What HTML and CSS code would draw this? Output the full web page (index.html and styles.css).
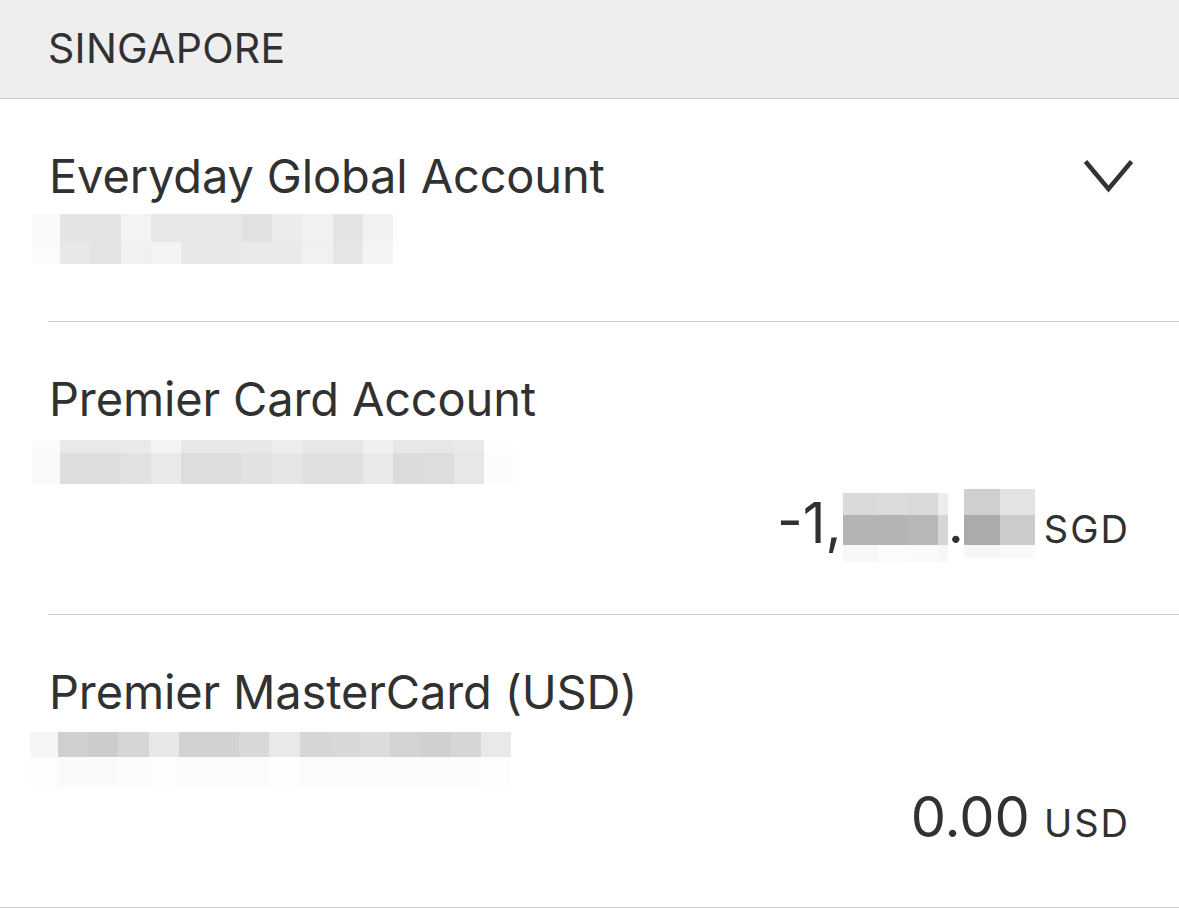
FILE: index.html
```html
<!DOCTYPE html>
<html lang="en">
<head>
  <meta charset="UTF-8" />
  <meta name="viewport" content="width=device-width, initial-scale=1" />
  <title>Accounts</title>
  <link rel="stylesheet" href="styles.css">
</head>
<body>

  <!-- Section title -->
  <div class="section-header">SINGAPORE</div>

  <!-- Everyday Global Account -->
  <div class="account account--everyday">
    <div class="account-head">
      <div class="account-name">Everyday Global Account</div>
      <svg class="chevron" viewBox="0 0 51 35" width="51" height="35" aria-hidden="true">
        <polyline points="2.5,2.5 25.5,30 48.5,2.5" />
      </svg>
    </div>
    <div class="mosaic mosaic--number"
         data-cols="28 30.3 30.3 30.3 30.3 30.3 30.3 30.3 30.3 30.3 30.3 30.3"
         data-rows="28 22"
         data-shades="fa e4 e4 f3 e8 e8 e8 e1 ec f2 e4 f2 | fb e8 e4 f1 f3 e8 e8 e9 ea f1 e6 f4"></div>
  </div>

  <!-- Premier Card Account -->
  <div class="account account--card">
    <div class="account-head">
      <div class="account-name">Premier Card Account</div>
    </div>
    <div class="mosaic mosaic--number"
         data-cols="28 30.3 30.3 30.3 30.3 30.3 30.3 30.3 30.3 30.3 30.3 30.3 30.3 30.3 30.3 29"
         data-rows="13 31"
         data-shades="fb e9 e9 ea f3 e8 e8 e8 ed e7 e7 f0 e7 e7 ea fe | fa de de e2 e9 dd dd e2 e6 e0 e0 e9 db dd e7 fc"></div>
    <div class="amount">
      <span class="amount-value">-1,</span>
      <div class="mosaic mosaic--whole"
           data-cols="35 30 30 10"
           data-rows="22 30 17"
           data-shades="d9 dc d9 ec | b3 b3 b7 d6 | f8 fc fa f7"></div>
      <span class="amount-value">.</span>
      <div class="mosaic mosaic--cents"
           data-cols="36 35"
           data-rows="26 30 13"
           data-shades="cf e3 | ab cb | f6 f9"></div>
      <span class="amount-currency">SGD</span>
    </div>
  </div>

  <!-- Premier MasterCard (USD) -->
  <div class="account account--usd">
    <div class="account-head">
      <div class="account-name">Premier MasterCard (USD)</div>
    </div>
    <div class="mosaic mosaic--number"
         data-cols="28 30.2 30.2 30.2 30.2 30.2 30.2 30.2 30.2 30.2 30.2 30.2 30.2 30.2 30.2 30.2"
         data-rows="25 30"
         data-shades="f6 cf cc d6 e8 d2 d2 d8 e9 d6 d8 dc d4 d0 d6 e9 | fd fa fa fc fd fb fb fb fe fb fb fb fb fb fc fd"></div>
    <div class="amount">
      <span class="amount-value">0.00</span>
      <span class="amount-currency amount-currency--spaced">USD</span>
    </div>
  </div>

  <script>
    // Build the pixelated (hidden) numbers from their data attributes
    document.querySelectorAll('.mosaic').forEach(m => {
      const px = v => v + 'px';
      m.style.gridTemplateColumns = m.dataset.cols.split(' ').map(px).join(' ');
      m.style.gridTemplateRows = m.dataset.rows.split(' ').map(px).join(' ');
      m.dataset.shades.split('|').forEach(row => {
        row.trim().split(/\s+/).forEach(s => {
          const cell = document.createElement('span');
          cell.style.background = '#' + s + s + s;
          m.appendChild(cell);
        });
      });
    });
  </script>
</body>
</html>
```

FILE: styles.css
```css
  /* General */
  *, *::before, *::after { box-sizing: border-box; }
  body {
    margin: 0;
    background: #fff;
    color: #313131;
    font-family: Inter, "Noto Sans", sans-serif;
  }

  /* Grey section title */
  .section-header {
    height: 99px;
    padding: 24px 48px 0;
    background: #eeeeee;
    border-bottom: 1px solid #c8c8c8;
    font-size: 41px;
    line-height: 48px;
    letter-spacing: 0.3px;
  }

  /* Account rows, separator starts under the text */
  .account {
    margin-left: 48px;
    padding: 48px 49px 57px 1px;
    border-bottom: 1px solid #cacaca;
  }
  .account--usd {
    margin-left: 0;
    padding-left: 49px;
    padding-bottom: 58px;
  }
  .account--card {
    padding-bottom: 52px;
  }

  .account-head {
    display: flex;
    justify-content: space-between;
    align-items: flex-start;
  }
  .account-name {
    font-size: 47px;
    line-height: 58px;
    letter-spacing: -0.15px;
    white-space: nowrap;
  }
  .chevron {
    margin-top: 12px;
    margin-right: -4px;
    fill: none;
    stroke: #333;
    stroke-width: 4.5;
  }

  /* Pixelated blocks */
  .mosaic {
    display: grid;
  }
  .mosaic--number {
    width: max-content;
    margin-left: -17px;
  }
  .account--everyday .mosaic--number { margin-top: 9px; }
  .account--card .mosaic--number { margin-top: 12px; }
  .account--usd .mosaic--number { margin-top: 11px; margin-left: -19px; }

  /* Balance line */
  .amount {
    display: flex;
    justify-content: flex-end;
    align-items: baseline;
  }
  .account--card .amount { margin-top: 7px; }
  .account--usd .amount { margin-top: -2px; }

  .amount-value {
    font-size: 56px;
    line-height: 64px;
  }
  .amount-currency {
    margin-left: 9px;
    font-size: 38px;
    line-height: 44px;
    letter-spacing: 2px;
  }
  .amount-currency--spaced {
    margin-left: 14px;
  }
  .mosaic--whole {
    align-self: flex-start;
    margin-top: 2px;
    margin-left: 1px;
  }
  .mosaic--cents {
    align-self: flex-start;
    margin-top: -2px;
  }
```
